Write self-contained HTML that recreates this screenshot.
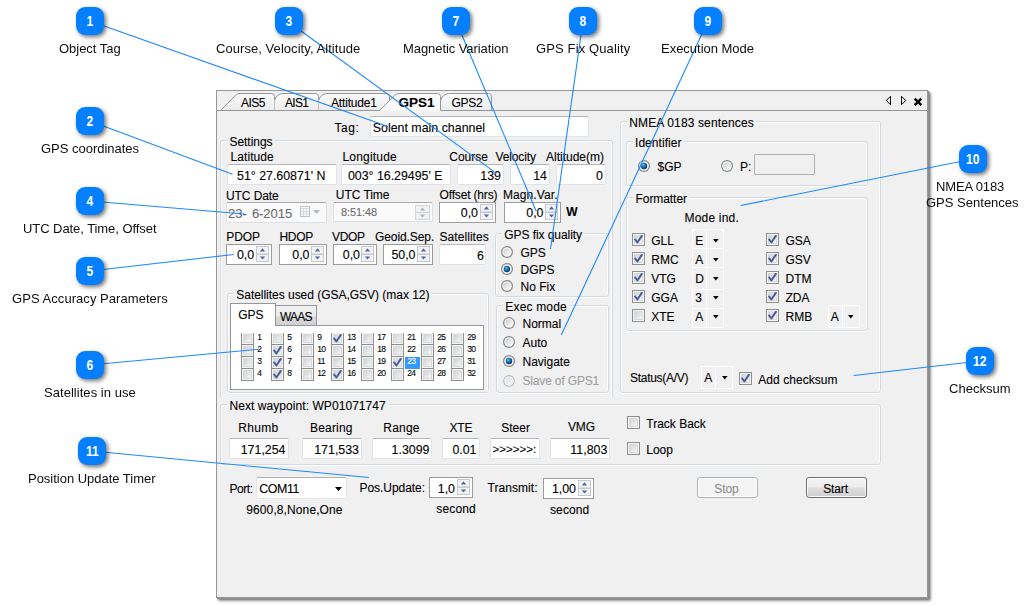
<!DOCTYPE html>
<html><head><meta charset="utf-8"><title>GPS</title>
<style>
html,body{margin:0;padding:0;background:#fff;}
body{width:1036px;height:606px;position:relative;overflow:hidden;font-family:"Liberation Sans",sans-serif;font-size:12px;color:#000;}
.a{position:absolute;display:block;}
.t{position:absolute;white-space:nowrap;-webkit-text-stroke:0.1px;}
.cl{color:#0e0e0e;will-change:transform;-webkit-text-stroke:0;}
.win{position:absolute;left:216px;top:90px;width:710px;height:506px;background:#f0f0f0;border:1px solid #979797;box-shadow:1px 1px 0 #8c8c8c,2px 2px 2px rgba(105,105,105,.85),3px 3px 3px rgba(0,0,0,.28);}
.tb{position:absolute;box-sizing:border-box;background:#fff;border:1px solid #e0e4ea;border-top-color:#b4b7bd;border-radius:2px;}
.tbd{position:absolute;box-sizing:border-box;background:#f0f0f0;border:1px solid #adb2b5;border-radius:1px;}
.sp{position:absolute;box-sizing:border-box;background:#fff;border:1px solid #9c9c9c;}
.sp.dis{background:#fafafa;border-color:#dde0e5;border-top-color:#a8a8a8;border-radius:2px;}
.gb{position:absolute;box-sizing:border-box;border:1px solid #d0dae3;border-radius:3px;box-shadow:inset 1px 1px 0 #fff,inset -1px 0 0 #fff,0 1px 0 #fff;}
.gbo{border-bottom:none;border-bottom-left-radius:0;border-bottom-right-radius:0;box-shadow:inset 1px 1px 0 #fff,inset -1px 0 0 #fff;}
.gl{position:absolute;background:#f0f0f0;}
.cb{position:absolute;box-sizing:border-box;border:1px solid #fff;background:#f0f0f0;}
.bd span{display:inline-block;transform:scaleX(.86);}
.bd{position:absolute;width:28px;height:28px;border-radius:9px;background:#037fff;color:#fff;font-weight:bold;font-size:14px;line-height:28px;text-align:center;box-shadow:2px 2px 4px rgba(0,0,0,.55);}
.btn{position:absolute;box-sizing:border-box;border:1px solid #707070;border-radius:3px;background:linear-gradient(#f4f4f4 0%,#ececec 48%,#dddddd 52%,#cfcfcf 100%);box-shadow:inset 0 0 0 1px rgba(255,255,255,.8);text-align:center;}
.btn.dis{border-color:#adb2b5;background:#f4f4f4;color:#8a8a8a;}
</style></head><body>
<svg width="0" height="0" style="position:absolute"><defs>
<linearGradient id="cbg" x1="0" y1="0" x2="1" y2="1"><stop offset="0" stop-color="#cfd1d4"/><stop offset="1" stop-color="#f6f6f6"/></linearGradient>
<linearGradient id="rbg" x1="0" y1="0" x2="1" y2="1"><stop offset="0" stop-color="#c3c8cf"/><stop offset="0.55" stop-color="#e6e8eb"/><stop offset="1" stop-color="#fbfbfb"/></linearGradient>
<radialGradient id="rdot" cx="0.4" cy="0.35" r="0.75"><stop offset="0" stop-color="#5cc8f2"/><stop offset="0.42" stop-color="#1672b4"/><stop offset="1" stop-color="#061e46"/></radialGradient>
<linearGradient id="tabg" x1="0" y1="0" x2="0" y2="1"><stop offset="0" stop-color="#fbfbfb"/><stop offset="1" stop-color="#ececec"/></linearGradient>
</defs></svg>

<div class="win"></div>
<svg class="a" style="left:217px;top:91px" width="710" height="22" viewBox="217 91 710 22">
<g fill="url(#tabg)" stroke="#959699" stroke-width="1">
<path d="M220.5 110.5 L235.3 95.6 Q237.2 93.5 240 93.5 L271.5 93.5 Q274.5 93.5 274.5 96.5 L274.5 110.5"/>
<path d="M274.5 100.5 Q277 93.5 283 93.5 L315.5 93.5 Q318.5 93.5 318.5 96.5 L318.5 110.5 L274.5 110.5"/>
<path d="M318.5 100.5 Q321 93.5 327 93.5 L386.5 93.5 Q389.5 93.5 389.5 96.5 L389.5 110.5 L318.5 110.5"/>
<path d="M440.5 100.5 Q443 93.5 449.5 93.5 L488.5 93.5 Q491.5 93.5 491.5 96.5 L491.5 110.5 L440.5 110.5"/>
</g>
<path d="M217 110.5 L927 110.5" stroke="#959699" fill="none"/>
<path d="M379.5 110.5 L394.8 95.4 Q396.6 93.5 399.5 93.5 L437.5 93.5 Q440.5 93.5 440.5 96.5 L440.5 110.5 L440.5 112 L379.5 112 Z" fill="#fbfbfb" stroke="none"/>
<path d="M379.5 110.5 L394.8 95.4 Q396.6 93.5 399.5 93.5 L437.5 93.5 Q440.5 93.5 440.5 96.5 L440.5 110.5" fill="none" stroke="#959699"/>
<path d="M380.5 111 L440 111" stroke="#f4f4f4" stroke-width="2" fill="none"/>
<path d="M890.5 96.3 L890.5 104.7 L886.3 100.5 Z" fill="none" stroke="#000" stroke-width="1"/>
<path d="M901.5 96.3 L901.5 104.7 L905.7 100.5 Z" fill="none" stroke="#000" stroke-width="1"/>
<path d="M914.7 98.6 L921.3 105.2 M921.3 98.6 L914.7 105.2" fill="none" stroke="#000" stroke-width="2.5"/>
</svg>
<div class="t " style="top:95px;font-size:12px;line-height:16px;left:241.00px;letter-spacing:-0.505px;">AIS5</div>
<div class="t " style="top:95px;font-size:12px;line-height:16px;left:285.00px;letter-spacing:-0.672px;">AIS1</div>
<div class="t " style="top:95px;font-size:12px;line-height:16px;left:331.00px;letter-spacing:-0.170px;">Attitude1</div>
<div class="t " style="top:95px;font-size:13.5px;line-height:16px;left:398.6px;font-weight:bold;">GPS1</div>
<div class="t " style="top:95px;font-size:12px;line-height:16px;left:451.40px;letter-spacing:-0.272px;">GPS2</div>
<div class="t " style="top:120px;font-size:12px;line-height:16px;left:334.60px;letter-spacing:0.490px;">Tag:</div>
<div class="tb" style="left:370px;top:116px;width:219px;height:21px;"></div>
<div class="t " style="top:120px;font-size:12.4px;line-height:16px;left:372.8px;">Solent main channel</div>
<div class="gb gbo" style="left:220px;top:140px;width:393px;height:257px;"></div>
<div class="gl" style="left:227.5px;top:139px;width:47.0px;height:4px"></div>
<div class="t " style="top:134px;font-size:12px;line-height:16px;left:229.50px;letter-spacing:-0.051px;">Settings</div>
<div class="t " style="top:149px;font-size:12px;line-height:16px;left:230.50px;letter-spacing:0.070px;">Latitude</div>
<div class="t " style="top:149px;font-size:12px;line-height:16px;left:342.50px;letter-spacing:0.192px;">Longitude</div>
<div class="t " style="top:149px;font-size:12px;line-height:16px;left:449.30px;letter-spacing:-0.018px;">Course</div>
<div class="t " style="top:149px;font-size:12px;line-height:16px;left:495.50px;letter-spacing:-0.122px;">Velocity</div>
<div class="t " style="top:149px;font-size:12px;line-height:16px;left:546.00px;letter-spacing:-0.002px;">Altitude(m)</div>
<div class="tb" style="left:227px;top:164px;width:110px;height:21px;"></div>
<div class="t " style="top:168px;font-size:12.4px;line-height:16px;left:237.00px;letter-spacing:-0.013px;">51° 27.60871' N</div>
<div class="tb" style="left:341px;top:164px;width:110px;height:21px;"></div>
<div class="t " style="top:168px;font-size:12.4px;line-height:16px;left:348.00px;letter-spacing:-0.026px;">003° 16.29495' E</div>
<div class="tb" style="left:457px;top:164px;width:47px;height:21px;"></div>
<div class="t " style="top:168px;font-size:12.4px;line-height:16px;right:535px;">139</div>
<div class="tb" style="left:510px;top:164px;width:40px;height:21px;"></div>
<div class="t " style="top:168px;font-size:12.4px;line-height:16px;right:489px;">14</div>
<div class="tb" style="left:556px;top:164px;width:50px;height:21px;"></div>
<div class="t " style="top:168px;font-size:12.4px;line-height:16px;right:433px;">0</div>
<div class="t " style="top:188px;font-size:12px;line-height:16px;left:226.00px;letter-spacing:-0.084px;">UTC Date</div>
<div class="t " style="top:187px;font-size:12px;line-height:16px;left:335.75px;letter-spacing:-0.036px;">UTC Time</div>
<div class="t " style="top:187px;font-size:12px;line-height:16px;left:439.50px;letter-spacing:-0.162px;">Offset (hrs)</div>
<div class="t " style="top:187px;font-size:12px;line-height:16px;left:503.00px;letter-spacing:0.087px;">Magn.Var.</div>
<div class="sp dis" style="left:226px;top:202px;width:101px;height:21px;"></div>
<div class="t " style="top:206px;font-size:13px;line-height:16px;left:228.00px;letter-spacing:-0.031px;color:#6d6d6d;word-spacing:1.6px;">23- 6-2015</div>
<svg class="a" style="left:300px;top:206px" width="22" height="12" viewBox="0 0 22 12">
<rect x="0.5" y="0.5" width="9" height="10" fill="#fcfcfc" stroke="#bfc2c8"/>
<path d="M1 2.5 H9 M3.5 3 V10 M6.5 3 V10 M1 5.5 H9 M1 8 H9" stroke="#d6d8dc" stroke-width="1" fill="none"/>
<path d="M13 4 L20 4 L16.5 8 Z" fill="#b4b7bc"/></svg>
<div class="sp dis" style="left:333px;top:202px;width:100px;height:20px;"></div>
<div class="t " style="top:204px;font-size:11px;line-height:16px;left:341.00px;letter-spacing:-0.116px;color:#6d6d6d;">8:51:48</div>
<svg class="a" style="left:415px;top:204.5px" width="15" height="15" viewBox="0 0 15 15">
<rect x="0.5" y="0.5" width="14" height="7" fill="#f1f1f1" stroke="#d3d5d9"/>
<rect x="0.5" y="7.5" width="14" height="7" fill="#f1f1f1" stroke="#d3d5d9"/>
<path d="M5 5.4 L7.5 2.4 L10 5.4 Z" fill="#b0b3ba"/><path d="M5 9.6 L7.5 12.6 L10 9.6 Z" fill="#b0b3ba"/></svg>
<div class="sp" style="left:439px;top:202px;width:57px;height:21px;"></div>
<div class="t " style="top:205px;font-size:12.4px;line-height:16px;right:558px;">0,0</div>
<svg class="a" style="left:480px;top:204px" width="13" height="16" viewBox="0 0 13 16"><rect x="0.5" y="0.5" width="12" height="7.5" fill="#f3f3f3" stroke="#c6c8cc"/><rect x="0.5" y="8.5" width="12" height="7" fill="#f3f3f3" stroke="#c6c8cc"/><path d="M3.8 5.4 L6.5 2.2 L9.2 5.4 Z" fill="#5466ab"/><path d="M3.8 10.4 L6.5 13.6 L9.2 10.4 Z" fill="#5466ab"/></svg>
<div class="sp" style="left:504px;top:202px;width:57px;height:21px;"></div>
<div class="t " style="top:205px;font-size:12.4px;line-height:16px;right:492.5px;">0,0</div>
<svg class="a" style="left:545px;top:204px" width="13" height="16" viewBox="0 0 13 16"><rect x="0.5" y="0.5" width="12" height="7.5" fill="#f3f3f3" stroke="#c6c8cc"/><rect x="0.5" y="8.5" width="12" height="7" fill="#f3f3f3" stroke="#c6c8cc"/><path d="M3.8 5.4 L6.5 2.2 L9.2 5.4 Z" fill="#5466ab"/><path d="M3.8 10.4 L6.5 13.6 L9.2 10.4 Z" fill="#5466ab"/></svg>
<div class="t " style="top:204px;font-size:12px;line-height:16px;left:566.3px;font-weight:bold;">W</div>
<div class="t " style="top:229px;font-size:12px;line-height:16px;left:226.25px;letter-spacing:-0.086px;">PDOP</div>
<div class="t " style="top:229px;font-size:12px;line-height:16px;left:279.50px;letter-spacing:-0.306px;">HDOP</div>
<div class="t " style="top:229px;font-size:12px;line-height:16px;left:332.00px;letter-spacing:-0.336px;">VDOP</div>
<div class="t " style="top:229px;font-size:12px;line-height:16px;left:375.00px;letter-spacing:-0.087px;">Geoid.Sep.</div>
<div class="t " style="top:229px;font-size:12px;line-height:16px;left:439.50px;letter-spacing:0.062px;">Satellites</div>
<div class="sp" style="left:226px;top:244px;width:46px;height:21px;"></div>
<div class="t " style="top:247px;font-size:12.4px;line-height:16px;right:781.8px;">0,0</div>
<svg class="a" style="left:256px;top:246px" width="13" height="16" viewBox="0 0 13 16"><rect x="0.5" y="0.5" width="12" height="7.5" fill="#f3f3f3" stroke="#c6c8cc"/><rect x="0.5" y="8.5" width="12" height="7" fill="#f3f3f3" stroke="#c6c8cc"/><path d="M3.8 5.4 L6.5 2.2 L9.2 5.4 Z" fill="#5466ab"/><path d="M3.8 10.4 L6.5 13.6 L9.2 10.4 Z" fill="#5466ab"/></svg>
<div class="sp" style="left:279px;top:244px;width:48px;height:21px;"></div>
<div class="t " style="top:247px;font-size:12.4px;line-height:16px;right:726.5px;">0,0</div>
<svg class="a" style="left:311px;top:246px" width="13" height="16" viewBox="0 0 13 16"><rect x="0.5" y="0.5" width="12" height="7.5" fill="#f3f3f3" stroke="#c6c8cc"/><rect x="0.5" y="8.5" width="12" height="7" fill="#f3f3f3" stroke="#c6c8cc"/><path d="M3.8 5.4 L6.5 2.2 L9.2 5.4 Z" fill="#5466ab"/><path d="M3.8 10.4 L6.5 13.6 L9.2 10.4 Z" fill="#5466ab"/></svg>
<div class="sp" style="left:333px;top:244px;width:44px;height:21px;"></div>
<div class="t " style="top:247px;font-size:12.4px;line-height:16px;right:676px;">0,0</div>
<svg class="a" style="left:361px;top:246px" width="13" height="16" viewBox="0 0 13 16"><rect x="0.5" y="0.5" width="12" height="7.5" fill="#f3f3f3" stroke="#c6c8cc"/><rect x="0.5" y="8.5" width="12" height="7" fill="#f3f3f3" stroke="#c6c8cc"/><path d="M3.8 5.4 L6.5 2.2 L9.2 5.4 Z" fill="#5466ab"/><path d="M3.8 10.4 L6.5 13.6 L9.2 10.4 Z" fill="#5466ab"/></svg>
<div class="sp" style="left:383px;top:244px;width:50px;height:21px;"></div>
<div class="t " style="top:247px;font-size:12.4px;line-height:16px;right:620.5px;">50,0</div>
<svg class="a" style="left:417px;top:246px" width="13" height="16" viewBox="0 0 13 16"><rect x="0.5" y="0.5" width="12" height="7.5" fill="#f3f3f3" stroke="#c6c8cc"/><rect x="0.5" y="8.5" width="12" height="7" fill="#f3f3f3" stroke="#c6c8cc"/><path d="M3.8 5.4 L6.5 2.2 L9.2 5.4 Z" fill="#5466ab"/><path d="M3.8 10.4 L6.5 13.6 L9.2 10.4 Z" fill="#5466ab"/></svg>
<div class="tb" style="left:439px;top:244px;width:47px;height:21px;"></div>
<div class="t " style="top:248px;font-size:12.4px;line-height:16px;right:552px;">6</div>
<div class="gb" style="left:495px;top:233px;width:114px;height:64px;"></div>
<div class="gl" style="left:502.3px;top:232px;width:81.69999999999999px;height:4px"></div>
<div class="t " style="top:227px;font-size:12px;line-height:16px;left:504.30px;letter-spacing:-0.071px;">GPS fix quality</div>
<svg class="a" style="left:501px;top:246px" width="12" height="12" viewBox="0 0 12 12"><circle cx="6" cy="6" r="6" fill="#868788"/><circle cx="6" cy="6" r="4.8" fill="#f4f4f4"/><circle cx="6" cy="6" r="3.6" fill="url(#rbg)"/></svg>
<div class="t " style="top:245px;font-size:12px;line-height:16px;left:520.5px;">GPS</div>
<svg class="a" style="left:501px;top:263px" width="12" height="12" viewBox="0 0 12 12"><circle cx="6" cy="6" r="6" fill="#868788"/><circle cx="6" cy="6" r="4.8" fill="#f4f4f4"/><circle cx="6" cy="6" r="3.6" fill="url(#rbg)"/><circle cx="6" cy="6" r="3.2" fill="url(#rdot)"/></svg>
<div class="t " style="top:262px;font-size:12px;line-height:16px;left:520.5px;">DGPS</div>
<svg class="a" style="left:501px;top:280px" width="12" height="12" viewBox="0 0 12 12"><circle cx="6" cy="6" r="6" fill="#868788"/><circle cx="6" cy="6" r="4.8" fill="#f4f4f4"/><circle cx="6" cy="6" r="3.6" fill="url(#rbg)"/></svg>
<div class="t " style="top:279px;font-size:12px;line-height:16px;left:520.5px;">No Fix</div>
<div class="gb" style="left:496px;top:305px;width:113px;height:88px;"></div>
<div class="gl" style="left:503.3px;top:304px;width:65.40000000000003px;height:4px"></div>
<div class="t " style="top:299px;font-size:12px;line-height:16px;left:505.30px;letter-spacing:0.172px;">Exec mode</div>
<svg class="a" style="left:503px;top:317px" width="12" height="12" viewBox="0 0 12 12"><circle cx="6" cy="6" r="6" fill="#868788"/><circle cx="6" cy="6" r="4.8" fill="#f4f4f4"/><circle cx="6" cy="6" r="3.6" fill="url(#rbg)"/></svg>
<div class="t " style="top:316px;font-size:12px;line-height:16px;left:522.5px;">Normal</div>
<svg class="a" style="left:503px;top:336px" width="12" height="12" viewBox="0 0 12 12"><circle cx="6" cy="6" r="6" fill="#868788"/><circle cx="6" cy="6" r="4.8" fill="#f4f4f4"/><circle cx="6" cy="6" r="3.6" fill="url(#rbg)"/></svg>
<div class="t " style="top:335px;font-size:12px;line-height:16px;left:522.5px;">Auto</div>
<svg class="a" style="left:503px;top:355px" width="12" height="12" viewBox="0 0 12 12"><circle cx="6" cy="6" r="6" fill="#868788"/><circle cx="6" cy="6" r="4.8" fill="#f4f4f4"/><circle cx="6" cy="6" r="3.6" fill="url(#rbg)"/><circle cx="6" cy="6" r="3.2" fill="url(#rdot)"/></svg>
<div class="t " style="top:354px;font-size:12px;line-height:16px;left:522.5px;">Navigate</div>
<svg class="a" style="left:503px;top:374.5px" width="12" height="12" viewBox="0 0 12 12" opacity="0.45"><circle cx="6" cy="6" r="6" fill="#868788"/><circle cx="6" cy="6" r="4.8" fill="#f4f4f4"/><circle cx="6" cy="6" r="3.6" fill="url(#rbg)"/></svg>
<div class="t " style="top:373px;font-size:12px;line-height:16px;left:522.50px;letter-spacing:-0.163px;color:#a0a0a0;">Slave of GPS1</div>
<div class="gb" style="left:227px;top:293px;width:262px;height:100px;"></div>
<div class="gl" style="left:234.25px;top:292px;width:197.25px;height:4px"></div>
<div class="t " style="top:287px;font-size:12px;line-height:16px;left:236.25px;letter-spacing:-0.025px;">Satellites used (GSA,GSV) (max 12)</div>
<div class="a" style="left:230px;top:325px;width:254px;height:65px;box-sizing:border-box;background:#fff;border:1px solid #959699;"></div>
<div class="a" style="left:275px;top:305px;width:42px;height:21px;box-sizing:border-box;background:linear-gradient(#f2f2f2,#ebebeb 50%,#dddddd 51%,#cfcfcf);border:1px solid #959699;"></div>
<div class="a" style="left:230px;top:303px;width:46px;height:23px;box-sizing:border-box;background:#fff;border:1px solid #959699;border-bottom:none;"></div>
<div class="t " style="top:307px;font-size:12px;line-height:16px;left:238.25px;">GPS</div>
<div class="t " style="top:309px;font-size:12px;line-height:16px;left:280.00px;letter-spacing:-0.799px;">WAAS</div>
<svg class="a" style="left:241px;top:332px" width="13" height="13" viewBox="0 0 13 13"><rect x="0.5" y="0.5" width="12" height="12" fill="#f4f4f4" stroke="#8e8f8f"/><rect x="2.5" y="2.5" width="8" height="8" fill="url(#cbg)" stroke="#d9dadb"/></svg>
<div class="t " style="top:329px;font-size:8.5px;line-height:16px;left:257.3px;letter-spacing:-0.7px;">1</div>
<svg class="a" style="left:241px;top:344px" width="13" height="13" viewBox="0 0 13 13"><rect x="0.5" y="0.5" width="12" height="12" fill="#f4f4f4" stroke="#8e8f8f"/><rect x="2.5" y="2.5" width="8" height="8" fill="url(#cbg)" stroke="#d9dadb"/></svg>
<div class="t " style="top:341px;font-size:8.5px;line-height:16px;left:257.3px;letter-spacing:-0.7px;">2</div>
<svg class="a" style="left:241px;top:356px" width="13" height="13" viewBox="0 0 13 13"><rect x="0.5" y="0.5" width="12" height="12" fill="#f4f4f4" stroke="#8e8f8f"/><rect x="2.5" y="2.5" width="8" height="8" fill="url(#cbg)" stroke="#d9dadb"/></svg>
<div class="t " style="top:353px;font-size:8.5px;line-height:16px;left:257.3px;letter-spacing:-0.7px;">3</div>
<svg class="a" style="left:241px;top:368px" width="13" height="13" viewBox="0 0 13 13"><rect x="0.5" y="0.5" width="12" height="12" fill="#f4f4f4" stroke="#8e8f8f"/><rect x="2.5" y="2.5" width="8" height="8" fill="url(#cbg)" stroke="#d9dadb"/></svg>
<div class="t " style="top:365px;font-size:8.5px;line-height:16px;left:257.3px;letter-spacing:-0.7px;">4</div>
<svg class="a" style="left:271px;top:332px" width="13" height="13" viewBox="0 0 13 13"><rect x="0.5" y="0.5" width="12" height="12" fill="#f4f4f4" stroke="#8e8f8f"/><rect x="2.5" y="2.5" width="8" height="8" fill="url(#cbg)" stroke="#d9dadb"/></svg>
<div class="t " style="top:329px;font-size:8.5px;line-height:16px;left:287.3px;letter-spacing:-0.7px;">5</div>
<svg class="a" style="left:271px;top:344px" width="13" height="13" viewBox="0 0 13 13"><rect x="0.5" y="0.5" width="12" height="12" fill="#f4f4f4" stroke="#8e8f8f"/><rect x="2.5" y="2.5" width="8" height="8" fill="url(#cbg)" stroke="#d9dadb"/><path d="M3.1 6.4 L5.4 9.5 L9.8 2.9" fill="none" stroke="#465a99" stroke-width="1.9" stroke-linecap="round" stroke-linejoin="round"/></svg>
<div class="t " style="top:341px;font-size:8.5px;line-height:16px;left:287.3px;letter-spacing:-0.7px;">6</div>
<svg class="a" style="left:271px;top:356px" width="13" height="13" viewBox="0 0 13 13"><rect x="0.5" y="0.5" width="12" height="12" fill="#f4f4f4" stroke="#8e8f8f"/><rect x="2.5" y="2.5" width="8" height="8" fill="url(#cbg)" stroke="#d9dadb"/><path d="M3.1 6.4 L5.4 9.5 L9.8 2.9" fill="none" stroke="#465a99" stroke-width="1.9" stroke-linecap="round" stroke-linejoin="round"/></svg>
<div class="t " style="top:353px;font-size:8.5px;line-height:16px;left:287.3px;letter-spacing:-0.7px;">7</div>
<svg class="a" style="left:271px;top:368px" width="13" height="13" viewBox="0 0 13 13"><rect x="0.5" y="0.5" width="12" height="12" fill="#f4f4f4" stroke="#8e8f8f"/><rect x="2.5" y="2.5" width="8" height="8" fill="url(#cbg)" stroke="#d9dadb"/><path d="M3.1 6.4 L5.4 9.5 L9.8 2.9" fill="none" stroke="#465a99" stroke-width="1.9" stroke-linecap="round" stroke-linejoin="round"/></svg>
<div class="t " style="top:365px;font-size:8.5px;line-height:16px;left:287.3px;letter-spacing:-0.7px;">8</div>
<svg class="a" style="left:301px;top:332px" width="13" height="13" viewBox="0 0 13 13"><rect x="0.5" y="0.5" width="12" height="12" fill="#f4f4f4" stroke="#8e8f8f"/><rect x="2.5" y="2.5" width="8" height="8" fill="url(#cbg)" stroke="#d9dadb"/></svg>
<div class="t " style="top:329px;font-size:8.5px;line-height:16px;left:317.3px;letter-spacing:-0.7px;">9</div>
<svg class="a" style="left:301px;top:344px" width="13" height="13" viewBox="0 0 13 13"><rect x="0.5" y="0.5" width="12" height="12" fill="#f4f4f4" stroke="#8e8f8f"/><rect x="2.5" y="2.5" width="8" height="8" fill="url(#cbg)" stroke="#d9dadb"/></svg>
<div class="t " style="top:341px;font-size:8.5px;line-height:16px;left:317.3px;letter-spacing:-0.7px;">10</div>
<svg class="a" style="left:301px;top:356px" width="13" height="13" viewBox="0 0 13 13"><rect x="0.5" y="0.5" width="12" height="12" fill="#f4f4f4" stroke="#8e8f8f"/><rect x="2.5" y="2.5" width="8" height="8" fill="url(#cbg)" stroke="#d9dadb"/></svg>
<div class="t " style="top:353px;font-size:8.5px;line-height:16px;left:317.3px;letter-spacing:-0.7px;">11</div>
<svg class="a" style="left:301px;top:368px" width="13" height="13" viewBox="0 0 13 13"><rect x="0.5" y="0.5" width="12" height="12" fill="#f4f4f4" stroke="#8e8f8f"/><rect x="2.5" y="2.5" width="8" height="8" fill="url(#cbg)" stroke="#d9dadb"/></svg>
<div class="t " style="top:365px;font-size:8.5px;line-height:16px;left:317.3px;letter-spacing:-0.7px;">12</div>
<svg class="a" style="left:331px;top:332px" width="13" height="13" viewBox="0 0 13 13"><rect x="0.5" y="0.5" width="12" height="12" fill="#f4f4f4" stroke="#8e8f8f"/><rect x="2.5" y="2.5" width="8" height="8" fill="url(#cbg)" stroke="#d9dadb"/><path d="M3.1 6.4 L5.4 9.5 L9.8 2.9" fill="none" stroke="#465a99" stroke-width="1.9" stroke-linecap="round" stroke-linejoin="round"/></svg>
<div class="t " style="top:329px;font-size:8.5px;line-height:16px;left:347.3px;letter-spacing:-0.7px;">13</div>
<svg class="a" style="left:331px;top:344px" width="13" height="13" viewBox="0 0 13 13"><rect x="0.5" y="0.5" width="12" height="12" fill="#f4f4f4" stroke="#8e8f8f"/><rect x="2.5" y="2.5" width="8" height="8" fill="url(#cbg)" stroke="#d9dadb"/></svg>
<div class="t " style="top:341px;font-size:8.5px;line-height:16px;left:347.3px;letter-spacing:-0.7px;">14</div>
<svg class="a" style="left:331px;top:356px" width="13" height="13" viewBox="0 0 13 13"><rect x="0.5" y="0.5" width="12" height="12" fill="#f4f4f4" stroke="#8e8f8f"/><rect x="2.5" y="2.5" width="8" height="8" fill="url(#cbg)" stroke="#d9dadb"/></svg>
<div class="t " style="top:353px;font-size:8.5px;line-height:16px;left:347.3px;letter-spacing:-0.7px;">15</div>
<svg class="a" style="left:331px;top:368px" width="13" height="13" viewBox="0 0 13 13"><rect x="0.5" y="0.5" width="12" height="12" fill="#f4f4f4" stroke="#8e8f8f"/><rect x="2.5" y="2.5" width="8" height="8" fill="url(#cbg)" stroke="#d9dadb"/><path d="M3.1 6.4 L5.4 9.5 L9.8 2.9" fill="none" stroke="#465a99" stroke-width="1.9" stroke-linecap="round" stroke-linejoin="round"/></svg>
<div class="t " style="top:365px;font-size:8.5px;line-height:16px;left:347.3px;letter-spacing:-0.7px;">16</div>
<svg class="a" style="left:361px;top:332px" width="13" height="13" viewBox="0 0 13 13"><rect x="0.5" y="0.5" width="12" height="12" fill="#f4f4f4" stroke="#8e8f8f"/><rect x="2.5" y="2.5" width="8" height="8" fill="url(#cbg)" stroke="#d9dadb"/></svg>
<div class="t " style="top:329px;font-size:8.5px;line-height:16px;left:377.3px;letter-spacing:-0.7px;">17</div>
<svg class="a" style="left:361px;top:344px" width="13" height="13" viewBox="0 0 13 13"><rect x="0.5" y="0.5" width="12" height="12" fill="#f4f4f4" stroke="#8e8f8f"/><rect x="2.5" y="2.5" width="8" height="8" fill="url(#cbg)" stroke="#d9dadb"/></svg>
<div class="t " style="top:341px;font-size:8.5px;line-height:16px;left:377.3px;letter-spacing:-0.7px;">18</div>
<svg class="a" style="left:361px;top:356px" width="13" height="13" viewBox="0 0 13 13"><rect x="0.5" y="0.5" width="12" height="12" fill="#f4f4f4" stroke="#8e8f8f"/><rect x="2.5" y="2.5" width="8" height="8" fill="url(#cbg)" stroke="#d9dadb"/></svg>
<div class="t " style="top:353px;font-size:8.5px;line-height:16px;left:377.3px;letter-spacing:-0.7px;">19</div>
<svg class="a" style="left:361px;top:368px" width="13" height="13" viewBox="0 0 13 13"><rect x="0.5" y="0.5" width="12" height="12" fill="#f4f4f4" stroke="#8e8f8f"/><rect x="2.5" y="2.5" width="8" height="8" fill="url(#cbg)" stroke="#d9dadb"/></svg>
<div class="t " style="top:365px;font-size:8.5px;line-height:16px;left:377.3px;letter-spacing:-0.7px;">20</div>
<svg class="a" style="left:391px;top:332px" width="13" height="13" viewBox="0 0 13 13"><rect x="0.5" y="0.5" width="12" height="12" fill="#f4f4f4" stroke="#8e8f8f"/><rect x="2.5" y="2.5" width="8" height="8" fill="url(#cbg)" stroke="#d9dadb"/></svg>
<div class="t " style="top:329px;font-size:8.5px;line-height:16px;left:407.3px;letter-spacing:-0.7px;">21</div>
<svg class="a" style="left:391px;top:344px" width="13" height="13" viewBox="0 0 13 13"><rect x="0.5" y="0.5" width="12" height="12" fill="#f4f4f4" stroke="#8e8f8f"/><rect x="2.5" y="2.5" width="8" height="8" fill="url(#cbg)" stroke="#d9dadb"/></svg>
<div class="t " style="top:341px;font-size:8.5px;line-height:16px;left:407.3px;letter-spacing:-0.7px;">22</div>
<svg class="a" style="left:391px;top:356px" width="13" height="13" viewBox="0 0 13 13"><rect x="0.5" y="0.5" width="12" height="12" fill="#f4f4f4" stroke="#8e8f8f"/><rect x="2.5" y="2.5" width="8" height="8" fill="url(#cbg)" stroke="#d9dadb"/><path d="M3.1 6.4 L5.4 9.5 L9.8 2.9" fill="none" stroke="#465a99" stroke-width="1.9" stroke-linecap="round" stroke-linejoin="round"/></svg>
<div class="a" style="left:405px;top:357px;width:14.7px;height:11.5px;background:#3399ff;"></div>
<div class="t " style="top:353px;font-size:8.5px;line-height:16px;left:407.3px;color:#fff;letter-spacing:-0.7px;">23</div>
<svg class="a" style="left:391px;top:368px" width="13" height="13" viewBox="0 0 13 13"><rect x="0.5" y="0.5" width="12" height="12" fill="#f4f4f4" stroke="#8e8f8f"/><rect x="2.5" y="2.5" width="8" height="8" fill="url(#cbg)" stroke="#d9dadb"/></svg>
<div class="t " style="top:365px;font-size:8.5px;line-height:16px;left:407.3px;letter-spacing:-0.7px;">24</div>
<svg class="a" style="left:421px;top:332px" width="13" height="13" viewBox="0 0 13 13"><rect x="0.5" y="0.5" width="12" height="12" fill="#f4f4f4" stroke="#8e8f8f"/><rect x="2.5" y="2.5" width="8" height="8" fill="url(#cbg)" stroke="#d9dadb"/></svg>
<div class="t " style="top:329px;font-size:8.5px;line-height:16px;left:437.3px;letter-spacing:-0.7px;">25</div>
<svg class="a" style="left:421px;top:344px" width="13" height="13" viewBox="0 0 13 13"><rect x="0.5" y="0.5" width="12" height="12" fill="#f4f4f4" stroke="#8e8f8f"/><rect x="2.5" y="2.5" width="8" height="8" fill="url(#cbg)" stroke="#d9dadb"/></svg>
<div class="t " style="top:341px;font-size:8.5px;line-height:16px;left:437.3px;letter-spacing:-0.7px;">26</div>
<svg class="a" style="left:421px;top:356px" width="13" height="13" viewBox="0 0 13 13"><rect x="0.5" y="0.5" width="12" height="12" fill="#f4f4f4" stroke="#8e8f8f"/><rect x="2.5" y="2.5" width="8" height="8" fill="url(#cbg)" stroke="#d9dadb"/></svg>
<div class="t " style="top:353px;font-size:8.5px;line-height:16px;left:437.3px;letter-spacing:-0.7px;">27</div>
<svg class="a" style="left:421px;top:368px" width="13" height="13" viewBox="0 0 13 13"><rect x="0.5" y="0.5" width="12" height="12" fill="#f4f4f4" stroke="#8e8f8f"/><rect x="2.5" y="2.5" width="8" height="8" fill="url(#cbg)" stroke="#d9dadb"/></svg>
<div class="t " style="top:365px;font-size:8.5px;line-height:16px;left:437.3px;letter-spacing:-0.7px;">28</div>
<svg class="a" style="left:451px;top:332px" width="13" height="13" viewBox="0 0 13 13"><rect x="0.5" y="0.5" width="12" height="12" fill="#f4f4f4" stroke="#8e8f8f"/><rect x="2.5" y="2.5" width="8" height="8" fill="url(#cbg)" stroke="#d9dadb"/></svg>
<div class="t " style="top:329px;font-size:8.5px;line-height:16px;left:467.3px;letter-spacing:-0.7px;">29</div>
<svg class="a" style="left:451px;top:344px" width="13" height="13" viewBox="0 0 13 13"><rect x="0.5" y="0.5" width="12" height="12" fill="#f4f4f4" stroke="#8e8f8f"/><rect x="2.5" y="2.5" width="8" height="8" fill="url(#cbg)" stroke="#d9dadb"/></svg>
<div class="t " style="top:341px;font-size:8.5px;line-height:16px;left:467.3px;letter-spacing:-0.7px;">30</div>
<svg class="a" style="left:451px;top:356px" width="13" height="13" viewBox="0 0 13 13"><rect x="0.5" y="0.5" width="12" height="12" fill="#f4f4f4" stroke="#8e8f8f"/><rect x="2.5" y="2.5" width="8" height="8" fill="url(#cbg)" stroke="#d9dadb"/></svg>
<div class="t " style="top:353px;font-size:8.5px;line-height:16px;left:467.3px;letter-spacing:-0.7px;">31</div>
<svg class="a" style="left:451px;top:368px" width="13" height="13" viewBox="0 0 13 13"><rect x="0.5" y="0.5" width="12" height="12" fill="#f4f4f4" stroke="#8e8f8f"/><rect x="2.5" y="2.5" width="8" height="8" fill="url(#cbg)" stroke="#d9dadb"/></svg>
<div class="t " style="top:365px;font-size:8.5px;line-height:16px;left:467.3px;letter-spacing:-0.7px;">32</div>
<div class="a" style="left:240px;top:332px;width:240px;height:1px;background:#fff;"></div>
<div class="gb" style="left:620px;top:121px;width:261px;height:272px;"></div>
<div class="gl" style="left:627.25px;top:120px;width:128.5px;height:4px"></div>
<div class="t " style="top:115px;font-size:12px;line-height:16px;left:629.25px;letter-spacing:0.135px;">NMEA 0183 sentences</div>
<div class="gb" style="left:626px;top:141px;width:242px;height:45px;"></div>
<div class="gl" style="left:633px;top:140px;width:50.5px;height:4px"></div>
<div class="t " style="top:135px;font-size:12px;line-height:16px;left:635.00px;letter-spacing:0.053px;">Identifier</div>
<svg class="a" style="left:638px;top:160px" width="12" height="12" viewBox="0 0 12 12"><circle cx="6" cy="6" r="6" fill="#868788"/><circle cx="6" cy="6" r="4.8" fill="#f4f4f4"/><circle cx="6" cy="6" r="3.6" fill="url(#rbg)"/><circle cx="6" cy="6" r="3.2" fill="url(#rdot)"/></svg>
<div class="t " style="top:159px;font-size:12px;line-height:16px;left:657.5px;">$GP</div>
<svg class="a" style="left:721px;top:160px" width="12" height="12" viewBox="0 0 12 12"><circle cx="6" cy="6" r="6" fill="#868788"/><circle cx="6" cy="6" r="4.8" fill="#f4f4f4"/><circle cx="6" cy="6" r="3.6" fill="url(#rbg)"/></svg>
<div class="t " style="top:159px;font-size:12px;line-height:16px;left:740px;">P:</div>
<div class="tbd" style="left:754px;top:154px;width:61px;height:21px;"></div>
<div class="gb" style="left:626px;top:197px;width:242px;height:134px;"></div>
<div class="gl" style="left:633.5px;top:196px;width:55.5px;height:4px"></div>
<div class="t " style="top:191px;font-size:12px;line-height:16px;left:635.50px;letter-spacing:-0.064px;">Formatter</div>
<div class="t " style="top:210px;font-size:12px;line-height:16px;left:684.50px;letter-spacing:0.193px;">Mode ind.</div>
<div class="cb" style="left:692px;top:229px;width:32px;height:99px;"></div>
<div class="a" style="left:706px;top:229px;width:1px;height:99px;background:#fff;"></div>
<div class="a" style="left:692px;top:248px;width:32px;height:1px;background:#fff;"></div>
<div class="a" style="left:692px;top:267px;width:32px;height:1px;background:#fff;"></div>
<div class="a" style="left:692px;top:289px;width:32px;height:1px;background:#fff;"></div>
<div class="a" style="left:692px;top:308px;width:32px;height:1px;background:#fff;"></div>
<svg class="a" style="left:632px;top:233px" width="13" height="13" viewBox="0 0 13 13"><rect x="0.5" y="0.5" width="12" height="12" fill="#f4f4f4" stroke="#8e8f8f"/><rect x="2.5" y="2.5" width="8" height="8" fill="url(#cbg)" stroke="#d9dadb"/><path d="M3.1 6.4 L5.4 9.5 L9.8 2.9" fill="none" stroke="#465a99" stroke-width="1.9" stroke-linecap="round" stroke-linejoin="round"/></svg>
<div class="t " style="top:233px;font-size:12px;line-height:16px;left:651.25px;">GLL</div>
<div class="t " style="top:233px;font-size:12px;line-height:16px;left:695.3px;">E</div>
<svg class="a" style="left:711.7px;top:238.0px" width="7.6" height="5" viewBox="0 0 7.6 5"><path d="M1 1 L6.6 1 L3.8 4.4 Z" fill="#000"/></svg>
<svg class="a" style="left:632px;top:252px" width="13" height="13" viewBox="0 0 13 13"><rect x="0.5" y="0.5" width="12" height="12" fill="#f4f4f4" stroke="#8e8f8f"/><rect x="2.5" y="2.5" width="8" height="8" fill="url(#cbg)" stroke="#d9dadb"/><path d="M3.1 6.4 L5.4 9.5 L9.8 2.9" fill="none" stroke="#465a99" stroke-width="1.9" stroke-linecap="round" stroke-linejoin="round"/></svg>
<div class="t " style="top:252px;font-size:12px;line-height:16px;left:651.25px;">RMC</div>
<div class="t " style="top:252px;font-size:12px;line-height:16px;left:695.3px;">A</div>
<svg class="a" style="left:711.7px;top:257.0px" width="7.6" height="5" viewBox="0 0 7.6 5"><path d="M1 1 L6.6 1 L3.8 4.4 Z" fill="#000"/></svg>
<svg class="a" style="left:632px;top:271px" width="13" height="13" viewBox="0 0 13 13"><rect x="0.5" y="0.5" width="12" height="12" fill="#f4f4f4" stroke="#8e8f8f"/><rect x="2.5" y="2.5" width="8" height="8" fill="url(#cbg)" stroke="#d9dadb"/><path d="M3.1 6.4 L5.4 9.5 L9.8 2.9" fill="none" stroke="#465a99" stroke-width="1.9" stroke-linecap="round" stroke-linejoin="round"/></svg>
<div class="t " style="top:271px;font-size:12px;line-height:16px;left:651.25px;">VTG</div>
<div class="t " style="top:271px;font-size:12px;line-height:16px;left:695.3px;">D</div>
<svg class="a" style="left:711.7px;top:276.0px" width="7.6" height="5" viewBox="0 0 7.6 5"><path d="M1 1 L6.6 1 L3.8 4.4 Z" fill="#000"/></svg>
<svg class="a" style="left:632px;top:290px" width="13" height="13" viewBox="0 0 13 13"><rect x="0.5" y="0.5" width="12" height="12" fill="#f4f4f4" stroke="#8e8f8f"/><rect x="2.5" y="2.5" width="8" height="8" fill="url(#cbg)" stroke="#d9dadb"/><path d="M3.1 6.4 L5.4 9.5 L9.8 2.9" fill="none" stroke="#465a99" stroke-width="1.9" stroke-linecap="round" stroke-linejoin="round"/></svg>
<div class="t " style="top:290px;font-size:12px;line-height:16px;left:651.25px;">GGA</div>
<div class="t " style="top:290px;font-size:12px;line-height:16px;left:695.3px;">3</div>
<svg class="a" style="left:711.7px;top:295.0px" width="7.6" height="5" viewBox="0 0 7.6 5"><path d="M1 1 L6.6 1 L3.8 4.4 Z" fill="#000"/></svg>
<svg class="a" style="left:632px;top:309px" width="13" height="13" viewBox="0 0 13 13"><rect x="0.5" y="0.5" width="12" height="12" fill="#f4f4f4" stroke="#8e8f8f"/><rect x="2.5" y="2.5" width="8" height="8" fill="url(#cbg)" stroke="#d9dadb"/></svg>
<div class="t " style="top:309px;font-size:12px;line-height:16px;left:651.25px;">XTE</div>
<div class="t " style="top:309px;font-size:12px;line-height:16px;left:695.3px;">A</div>
<svg class="a" style="left:711.7px;top:314.0px" width="7.6" height="5" viewBox="0 0 7.6 5"><path d="M1 1 L6.6 1 L3.8 4.4 Z" fill="#000"/></svg>
<svg class="a" style="left:766px;top:233px" width="13" height="13" viewBox="0 0 13 13"><rect x="0.5" y="0.5" width="12" height="12" fill="#f4f4f4" stroke="#8e8f8f"/><rect x="2.5" y="2.5" width="8" height="8" fill="url(#cbg)" stroke="#d9dadb"/><path d="M3.1 6.4 L5.4 9.5 L9.8 2.9" fill="none" stroke="#465a99" stroke-width="1.9" stroke-linecap="round" stroke-linejoin="round"/></svg>
<div class="t " style="top:233px;font-size:12px;line-height:16px;left:785.5px;">GSA</div>
<svg class="a" style="left:766px;top:252px" width="13" height="13" viewBox="0 0 13 13"><rect x="0.5" y="0.5" width="12" height="12" fill="#f4f4f4" stroke="#8e8f8f"/><rect x="2.5" y="2.5" width="8" height="8" fill="url(#cbg)" stroke="#d9dadb"/><path d="M3.1 6.4 L5.4 9.5 L9.8 2.9" fill="none" stroke="#465a99" stroke-width="1.9" stroke-linecap="round" stroke-linejoin="round"/></svg>
<div class="t " style="top:252px;font-size:12px;line-height:16px;left:785.5px;">GSV</div>
<svg class="a" style="left:766px;top:271px" width="13" height="13" viewBox="0 0 13 13"><rect x="0.5" y="0.5" width="12" height="12" fill="#f4f4f4" stroke="#8e8f8f"/><rect x="2.5" y="2.5" width="8" height="8" fill="url(#cbg)" stroke="#d9dadb"/><path d="M3.1 6.4 L5.4 9.5 L9.8 2.9" fill="none" stroke="#465a99" stroke-width="1.9" stroke-linecap="round" stroke-linejoin="round"/></svg>
<div class="t " style="top:271px;font-size:12px;line-height:16px;left:785.5px;">DTM</div>
<svg class="a" style="left:766px;top:290px" width="13" height="13" viewBox="0 0 13 13"><rect x="0.5" y="0.5" width="12" height="12" fill="#f4f4f4" stroke="#8e8f8f"/><rect x="2.5" y="2.5" width="8" height="8" fill="url(#cbg)" stroke="#d9dadb"/><path d="M3.1 6.4 L5.4 9.5 L9.8 2.9" fill="none" stroke="#465a99" stroke-width="1.9" stroke-linecap="round" stroke-linejoin="round"/></svg>
<div class="t " style="top:290px;font-size:12px;line-height:16px;left:785.5px;">ZDA</div>
<svg class="a" style="left:766px;top:309px" width="13" height="13" viewBox="0 0 13 13"><rect x="0.5" y="0.5" width="12" height="12" fill="#f4f4f4" stroke="#8e8f8f"/><rect x="2.5" y="2.5" width="8" height="8" fill="url(#cbg)" stroke="#d9dadb"/><path d="M3.1 6.4 L5.4 9.5 L9.8 2.9" fill="none" stroke="#465a99" stroke-width="1.9" stroke-linecap="round" stroke-linejoin="round"/></svg>
<div class="t " style="top:309px;font-size:12px;line-height:16px;left:785.5px;">RMB</div>
<div class="cb" style="left:828px;top:305px;width:32px;height:23px;"></div>
<div class="a" style="left:842px;top:305px;width:1px;height:23px;background:#fff;"></div>
<div class="t " style="top:309px;font-size:12px;line-height:16px;left:830.75px;">A</div>
<svg class="a" style="left:847.45px;top:314.0px" width="7.6" height="5" viewBox="0 0 7.6 5"><path d="M1 1 L6.6 1 L3.8 4.4 Z" fill="#000"/></svg>
<div class="t " style="top:370px;font-size:12px;line-height:16px;left:630.00px;letter-spacing:-0.286px;">Status(A/V)</div>
<div class="cb" style="left:701px;top:366px;width:32px;height:23px;"></div>
<div class="a" style="left:715px;top:366px;width:1px;height:23px;background:#fff;"></div>
<div class="t " style="top:370px;font-size:12px;line-height:16px;left:704.25px;">A</div>
<svg class="a" style="left:720.7px;top:374.5px" width="7.6" height="5" viewBox="0 0 7.6 5"><path d="M1 1 L6.6 1 L3.8 4.4 Z" fill="#000"/></svg>
<svg class="a" style="left:739px;top:372px" width="13" height="13" viewBox="0 0 13 13"><rect x="0.5" y="0.5" width="12" height="12" fill="#f4f4f4" stroke="#8e8f8f"/><rect x="2.5" y="2.5" width="8" height="8" fill="url(#cbg)" stroke="#d9dadb"/><path d="M3.1 6.4 L5.4 9.5 L9.8 2.9" fill="none" stroke="#465a99" stroke-width="1.9" stroke-linecap="round" stroke-linejoin="round"/></svg>
<div class="t " style="top:372px;font-size:12px;line-height:16px;left:758.25px;letter-spacing:0.049px;">Add checksum</div>
<div class="gb" style="left:220px;top:404px;width:661px;height:61px;"></div>
<div class="gl" style="left:227.5px;top:403px;width:160.25px;height:4px"></div>
<div class="t " style="top:398px;font-size:12px;line-height:16px;left:229.50px;letter-spacing:0.062px;">Next waypoint: WP01071747</div>
<div class="t " style="top:420px;font-size:12px;line-height:16px;left:238.25px;letter-spacing:0.328px;">Rhumb</div>
<div class="t " style="top:420px;font-size:12px;line-height:16px;left:310.00px;letter-spacing:0.189px;">Bearing</div>
<div class="t " style="top:420px;font-size:12px;line-height:16px;left:383.25px;letter-spacing:0.222px;">Range</div>
<div class="t " style="top:420px;font-size:12px;line-height:16px;left:449.50px;letter-spacing:-0.170px;">XTE</div>
<div class="t " style="top:420px;font-size:12px;line-height:16px;left:501.25px;letter-spacing:0.018px;">Steer</div>
<div class="t " style="top:419px;font-size:12px;line-height:16px;left:568.00px;letter-spacing:-0.168px;">VMG</div>
<div class="tb" style="left:229px;top:438px;width:60px;height:21px;"></div>
<div class="t " style="top:442px;font-size:12.4px;line-height:16px;right:750.5px;">171,254</div>
<div class="tb" style="left:302px;top:438px;width:60px;height:21px;"></div>
<div class="t " style="top:442px;font-size:12.4px;line-height:16px;right:677px;">171,533</div>
<div class="tb" style="left:372px;top:438px;width:60px;height:21px;"></div>
<div class="t " style="top:442px;font-size:12.4px;line-height:16px;right:606.5px;">1.3099</div>
<div class="tb" style="left:442px;top:438px;width:38px;height:21px;"></div>
<div class="t " style="top:442px;font-size:12.4px;line-height:16px;right:559.5px;">0.01</div>
<div class="tb" style="left:490px;top:438px;width:50px;height:21px;overflow:hidden;"></div>
<div class="t " style="top:441px;font-size:11.6px;line-height:16px;left:492.5px;width:45.5px;overflow:hidden;">&gt;&gt;&gt;&gt;&gt;&gt;:</div>
<div class="tb" style="left:550px;top:438px;width:60px;height:21px;"></div>
<div class="t " style="top:442px;font-size:12.4px;line-height:16px;right:428.70000000000005px;">11,803</div>
<svg class="a" style="left:627px;top:416px" width="13" height="13" viewBox="0 0 13 13"><rect x="0.5" y="0.5" width="12" height="12" fill="#f4f4f4" stroke="#8e8f8f"/><rect x="2.5" y="2.5" width="8" height="8" fill="url(#cbg)" stroke="#d9dadb"/></svg>
<div class="t " style="top:416px;font-size:12px;line-height:16px;left:646.25px;">Track Back</div>
<svg class="a" style="left:627px;top:442px" width="13" height="13" viewBox="0 0 13 13"><rect x="0.5" y="0.5" width="12" height="12" fill="#f4f4f4" stroke="#8e8f8f"/><rect x="2.5" y="2.5" width="8" height="8" fill="url(#cbg)" stroke="#d9dadb"/></svg>
<div class="t " style="top:442px;font-size:12px;line-height:16px;left:646.25px;">Loop</div>
<div class="t " style="top:481px;font-size:12px;line-height:16px;left:229.50px;letter-spacing:-0.461px;">Port:</div>
<div class="tb" style="left:256px;top:477px;width:91px;height:22px;border-color:#e6e6e6;border-top-color:#b0b0b0;"></div>
<div class="t " style="top:481px;font-size:12.4px;line-height:16px;left:259.25px;letter-spacing:-0.388px;">COM11</div>
<svg class="a" style="left:333.9px;top:485.8px" width="9" height="5.6" viewBox="0 0 9 5.6"><path d="M1 1 L8 1 L4.5 5.0 Z" fill="#000"/></svg>
<div class="t " style="top:502px;font-size:12px;line-height:16px;left:246.25px;letter-spacing:0.108px;">9600,8,None,One</div>
<div class="t " style="top:480px;font-size:12px;line-height:16px;left:359.50px;letter-spacing:-0.054px;">Pos.Update:</div>
<div class="sp" style="left:429px;top:477px;width:44px;height:21px;"></div>
<div class="t " style="top:481px;font-size:12.4px;line-height:16px;right:581px;">1,0</div>
<svg class="a" style="left:457px;top:479px" width="13" height="16" viewBox="0 0 13 16"><rect x="0.5" y="0.5" width="12" height="7.5" fill="#f3f3f3" stroke="#c6c8cc"/><rect x="0.5" y="8.5" width="12" height="7" fill="#f3f3f3" stroke="#c6c8cc"/><path d="M3.8 5.4 L6.5 2.2 L9.2 5.4 Z" fill="#5466ab"/><path d="M3.8 10.4 L6.5 13.6 L9.2 10.4 Z" fill="#5466ab"/></svg>
<div class="t " style="top:501px;font-size:12px;line-height:16px;left:436.25px;letter-spacing:0.160px;">second</div>
<div class="t " style="top:480px;font-size:12px;line-height:16px;left:487.50px;letter-spacing:0.055px;">Transmit:</div>
<div class="sp" style="left:543px;top:478px;width:51px;height:21px;"></div>
<div class="t " style="top:481px;font-size:12.4px;line-height:16px;right:460px;">1,00</div>
<svg class="a" style="left:578px;top:480px" width="13" height="16" viewBox="0 0 13 16"><rect x="0.5" y="0.5" width="12" height="7.5" fill="#f3f3f3" stroke="#c6c8cc"/><rect x="0.5" y="8.5" width="12" height="7" fill="#f3f3f3" stroke="#c6c8cc"/><path d="M3.8 5.4 L6.5 2.2 L9.2 5.4 Z" fill="#5466ab"/><path d="M3.8 10.4 L6.5 13.6 L9.2 10.4 Z" fill="#5466ab"/></svg>
<div class="t " style="top:502px;font-size:12px;line-height:16px;left:550.00px;letter-spacing:0.110px;">second</div>
<div class="btn dis" style="left:697px;top:477px;width:61px;height:21px;"></div>
<div class="t " style="top:481px;font-size:12px;line-height:16px;left:714.30px;letter-spacing:-0.128px;color:#8e8e8e;">Stop</div>
<div class="btn" style="left:806px;top:477px;width:61px;height:21px;"></div>
<div class="t " style="top:481px;font-size:12px;line-height:16px;left:823.20px;letter-spacing:-0.136px;">Start</div>
<svg class="a" style="left:0;top:0" width="1036" height="606" viewBox="0 0 1036 606"><g stroke="#1e88ff" stroke-width="1.1" fill="none">
<path d="M90 21 L388 126.6"/>
<path d="M90 121 L232.5 174.3"/>
<path d="M289 22.3 L496.5 173.4"/>
<path d="M90 201 L244.3 214"/>
<path d="M90 271 L233.75 254.5"/>
<path d="M90 365 L258.75 349.25"/>
<path d="M456 21 L536.2 211.3"/>
<path d="M583 21 L550.5 249"/>
<path d="M708 21 L561.3 335"/>
<path d="M973 159 L740.75 205.5"/>
<path d="M92 451 L368.75 477.5"/>
<path d="M980 361 L853.75 375.5"/>
</g></svg>
<div class="bd" style="left:76px;top:7px"><span>1</span></div>
<div class="t cl" style="top:41px;font-size:13px;line-height:16px;left:58.70px;letter-spacing:-0.023px;">Object Tag</div>
<div class="bd" style="left:76px;top:107px"><span>2</span></div>
<div class="t cl" style="top:141px;font-size:13px;line-height:16px;left:40.65px;letter-spacing:-0.020px;">GPS coordinates</div>
<div class="bd" style="left:275px;top:7px"><span>3</span></div>
<div class="t cl" style="top:41px;font-size:13px;line-height:16px;left:216.40px;letter-spacing:0.057px;">Course, Velocity, Altitude</div>
<div class="bd" style="left:76px;top:187px"><span>4</span></div>
<div class="t cl" style="top:221px;font-size:13px;line-height:16px;left:22.65px;letter-spacing:-0.064px;">UTC Date, Time, Offset</div>
<div class="bd" style="left:76px;top:257px"><span>5</span></div>
<div class="t cl" style="top:291px;font-size:13px;line-height:16px;left:11.90px;letter-spacing:0.052px;">GPS Accuracy Parameters</div>
<div class="bd" style="left:76px;top:351px"><span>6</span></div>
<div class="t cl" style="top:385px;font-size:13px;line-height:16px;left:43.90px;letter-spacing:0.044px;">Satellites in use</div>
<div class="bd" style="left:442px;top:7px"><span>7</span></div>
<div class="t cl" style="top:41px;font-size:13px;line-height:16px;left:403.15px;letter-spacing:-0.071px;">Magnetic Variation</div>
<div class="bd" style="left:569px;top:7px"><span>8</span></div>
<div class="t cl" style="top:41px;font-size:13px;line-height:16px;left:535.65px;letter-spacing:0.127px;">GPS Fix Quality</div>
<div class="bd" style="left:694px;top:7px"><span>9</span></div>
<div class="t cl" style="top:41px;font-size:13px;line-height:16px;left:660.65px;letter-spacing:-0.017px;">Execution Mode</div>
<div class="bd" style="left:959px;top:145px"><span>10</span></div>
<div class="t cl" style="top:179px;font-size:13px;line-height:16px;left:935.90px;letter-spacing:-0.146px;">NMEA 0183</div>
<div class="t cl" style="top:195px;font-size:13px;line-height:16px;left:926.10px;letter-spacing:0.009px;">GPS Sentences</div>
<div class="bd" style="left:78px;top:437px"><span>11</span></div>
<div class="t cl" style="top:471px;font-size:13px;line-height:16px;left:27.65px;letter-spacing:-0.020px;">Position Update Timer</div>
<div class="bd" style="left:966px;top:347px"><span>12</span></div>
<div class="t cl" style="top:381px;font-size:13px;line-height:16px;left:948.70px;letter-spacing:0.041px;">Checksum</div>
</body></html>
